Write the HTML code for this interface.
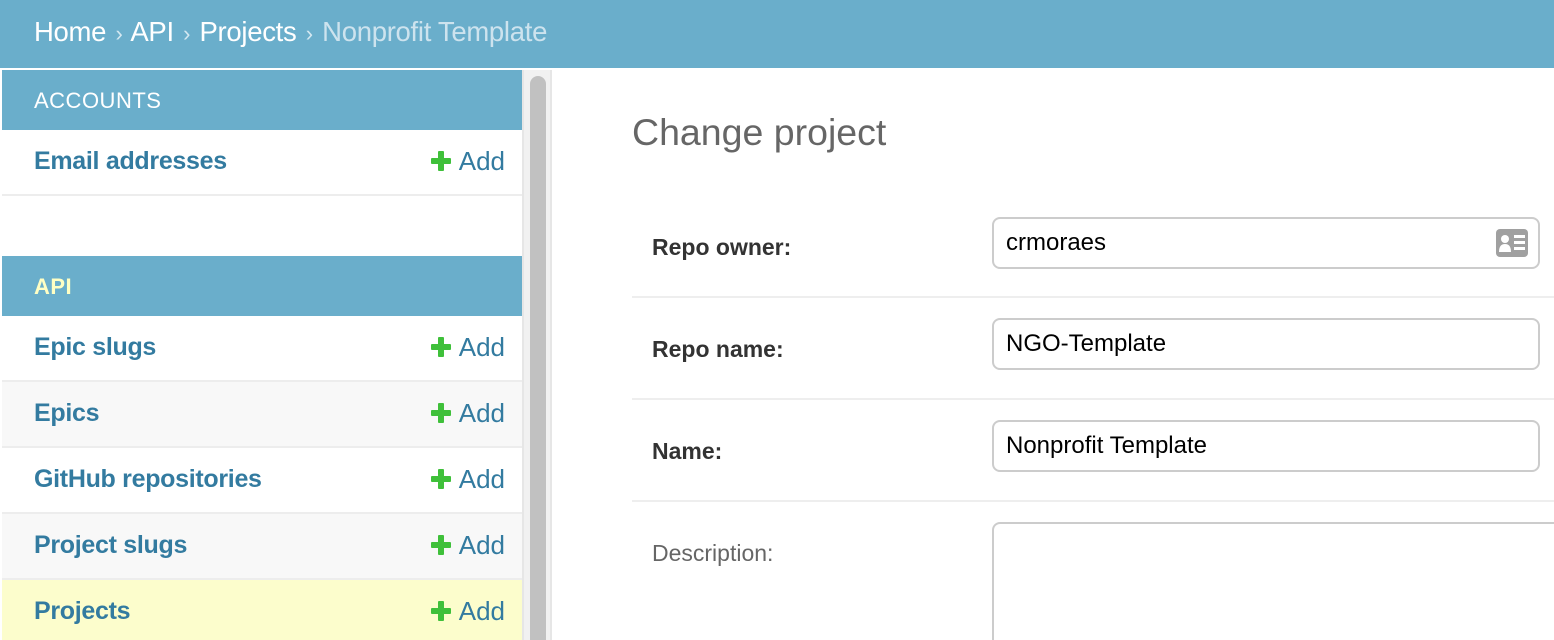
<!DOCTYPE html>
<html><head><meta charset="utf-8"><style>
*{box-sizing:border-box;margin:0;padding:0}
html,body{width:1554px;height:640px;overflow:hidden}
body{background:#fff;font-family:"Liberation Sans",sans-serif;position:relative}
#hdr{position:absolute;left:0;top:0;width:1554px;height:68px;background:#6aaecb;color:#fff;font-size:27.5px;padding:16px 0 0 34px;letter-spacing:-0.3px;white-space:nowrap}
#hdr .sep{color:#d4e8f1;margin:0 2px;font-size:22px}
#hdr .cur{color:#cde3ee}
#side{position:absolute;left:2px;top:70px;width:520px;height:570px;overflow:hidden}
.cap{height:60px;background:#6aaecb;color:#fff;font-size:22px;padding:18px 0 0 32px;letter-spacing:0.5px}
.row{height:66px;border-bottom:2px solid #ededed;position:relative;font-size:25px;font-weight:bold;color:#337ba0;padding:17px 0 0 32px;letter-spacing:-0.3px}
.row .add{position:absolute;right:17px;top:16px;font-weight:normal;color:#337ba0;font-size:26px;letter-spacing:0}
.row .add b{display:inline-block;position:relative;width:20px;height:20px;margin-right:8px;vertical-align:-1px}
.row .add b:before{content:"";position:absolute;left:7px;top:0;width:6px;height:20px;background:#3fc03a;border-radius:1px}
.row .add b:after{content:"";position:absolute;left:0;top:7px;width:20px;height:6px;background:#3fc03a;border-radius:1px}
.alt{background:#f8f8f8}
.sel{background:#fcfdcc}
#sb{position:absolute;left:522px;top:70px;width:30px;height:570px;background:#f1f1f1;border-left:2px solid #e6e6e6;border-right:2px solid #e6e6e6;overflow:hidden}
#sb div{position:absolute;left:6px;top:6px;width:16px;height:600px;background:#c1c1c1;border-radius:8px}
h1{position:absolute;left:632px;top:111px;font-size:37.5px;font-weight:normal;color:#666;letter-spacing:0}
.f{position:absolute;left:632px;width:922px;height:102px;border-bottom:2px solid #eee}
.f label{position:absolute;left:20px;top:38px;font-size:23px;font-weight:bold;color:#333}
.f .in{position:absolute;left:360px;top:12px;width:548px;height:52px;border:2px solid #ccc;border-radius:8px;font-size:24px;color:#000;padding:10px 0 0 12px}
</style></head><body>
<div id="hdr">Home <span class="sep">›</span> API <span class="sep">›</span> Projects <span class="sep">›</span> <span class="cur">Nonprofit Template</span></div>
<div id="side">
<div class="cap">ACCOUNTS</div>
<div class="row">Email addresses<span class="add"><b></b>Add</span></div>
<div style="height:60px"></div>
<div class="cap" style="color:#ffffc4;font-weight:bold">API</div>
<div class="row">Epic slugs<span class="add"><b></b>Add</span></div>
<div class="row alt">Epics<span class="add"><b></b>Add</span></div>
<div class="row">GitHub repositories<span class="add"><b></b>Add</span></div>
<div class="row alt">Project slugs<span class="add"><b></b>Add</span></div>
<div class="row sel">Projects<span class="add"><b></b>Add</span></div>
</div>
<div id="sb"><div></div></div>
<h1>Change project</h1>
<div class="f" style="top:196px"><label>Repo owner:</label><div class="in" style="top:21px;height:52px;padding-top:10px">crmoraes
<svg style="position:absolute;right:10px;top:10px" width="32" height="28" viewBox="0 0 32 28"><rect x="0" y="0" width="32" height="28" rx="4" fill="#a0a0a0"/><circle cx="9" cy="10" r="4" fill="#fff"/><path d="M3 23 Q3 15 9 15 Q15 15 15 23 Z" fill="#fff"/><rect x="18" y="6" width="11" height="3" fill="#fff"/><rect x="18" y="12" width="11" height="3" fill="#fff"/><rect x="18" y="18" width="11" height="3" fill="#fff"/></svg></div></div>
<div class="f" style="top:298px"><label>Repo name:</label><div class="in" style="top:20px">NGO-Template</div></div>
<div class="f" style="top:400px"><label>Name:</label><div class="in" style="top:20px">Nonprofit Template</div></div>
<div class="f" style="top:502px;border:none;height:138px;overflow:hidden"><label style="font-weight:normal;color:#666;top:38px">Description:</label><div class="in" style="top:20px;height:118px;width:580px;border-bottom:none;border-radius:8px 8px 0 0"></div></div>
</body></html>
